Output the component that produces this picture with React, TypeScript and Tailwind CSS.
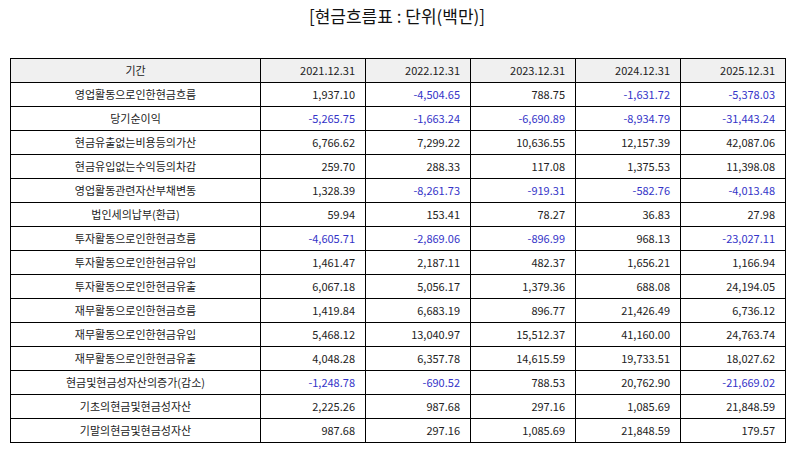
const years = ["2021.12.31", "2022.12.31", "2023.12.31", "2024.12.31", "2025.12.31"]

const rows: [string, string[]][] = [
  ["영업활동으로인한현금흐름", ["1,937.10", "-4,504.65", "788.75", "-1,631.72", "-5,378.03"]],
  ["당기순이익", ["-5,265.75", "-1,663.24", "-6,690.89", "-8,934.79", "-31,443.24"]],
  ["현금유출없는비용등의가산", ["6,766.62", "7,299.22", "10,636.55", "12,157.39", "42,087.06"]],
  ["현금유입없는수익등의차감", ["259.70", "288.33", "117.08", "1,375.53", "11,398.08"]],
  ["영업활동관련자산부채변동", ["1,328.39", "-8,261.73", "-919.31", "-582.76", "-4,013.48"]],
  ["법인세의납부(환급)", ["59.94", "153.41", "78.27", "36.83", "27.98"]],
  ["투자활동으로인한현금흐름", ["-4,605.71", "-2,869.06", "-896.99", "968.13", "-23,027.11"]],
  ["투자활동으로인한현금유입", ["1,461.47", "2,187.11", "482.37", "1,656.21", "1,166.94"]],
  ["투자활동으로인한현금유출", ["6,067.18", "5,056.17", "1,379.36", "688.08", "24,194.05"]],
  ["재무활동으로인한현금흐름", ["1,419.84", "6,683.19", "896.77", "21,426.49", "6,736.12"]],
  ["재무활동으로인한현금유입", ["5,468.12", "13,040.97", "15,512.37", "41,160.00", "24,763.74"]],
  ["재무활동으로인한현금유출", ["4,048.28", "6,357.78", "14,615.59", "19,733.51", "18,027.62"]],
  ["현금및현금성자산의증가(감소)", ["-1,248.78", "-690.52", "788.53", "20,762.90", "-21,669.02"]],
  ["기초의현금및현금성자산", ["2,225.26", "987.68", "297.16", "1,085.69", "21,848.59"]],
  ["기말의현금및현금성자산", ["987.68", "297.16", "1,085.69", "21,848.59", "179.57"]],
]

const font = { fontFamily: '"Noto Sans CJK KR", "Noto Sans", sans-serif' }

export default function App() {
  return (
    <div className="w-[794px] h-[452px] bg-white text-[#222]" style={font}>
      <h1 className="pt-[4px] h-[58px] text-center text-[17px] leading-[24px] font-normal text-[#111]">[현금흐름표 : 단위(백만)]</h1>
      <div className="px-[10px]">
        <table className="w-[775px] table-fixed border-collapse text-[11px]">
          <colgroup>
            <col className="w-[250px]" />
            {years.map((y) => (
              <col key={y} className="w-[105px]" />
            ))}
          </colgroup>
          <thead>
            <tr className="h-[24px] bg-[#f0f0f0]">
              <th className="border border-black font-normal text-center p-0">기간</th>
              {years.map((y) => (
                <th key={y} className="border border-black font-normal text-right pr-[10px]">{y}</th>
              ))}
            </tr>
          </thead>
          <tbody>
            {rows.map(([label, vals]) => (
              <tr key={label} className="h-[24px]">
                <td className="border border-black text-center p-0">{label}</td>
                {vals.map((v, i) => (
                  <td
                    key={i}
                    className={
                      v.startsWith("-")
                        ? "border border-black text-right pr-[10px] text-[#3434c8]"
                        : "border border-black text-right pr-[10px]"
                    }
                  >
                    {v}
                  </td>
                ))}
              </tr>
            ))}
          </tbody>
        </table>
      </div>
    </div>
  )
}
